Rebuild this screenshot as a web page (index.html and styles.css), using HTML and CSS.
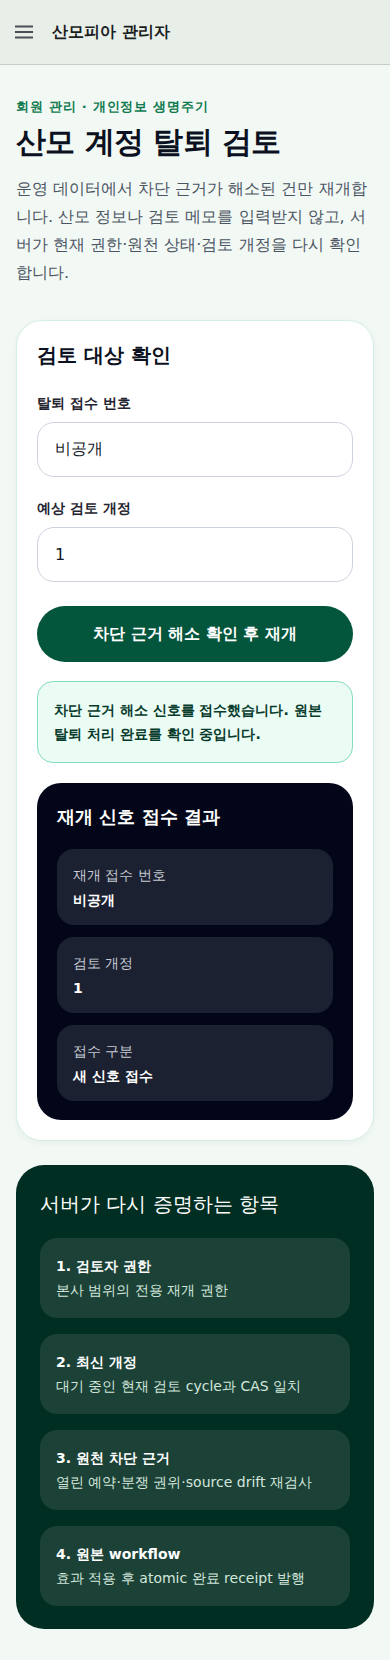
FILE: index.html
```html
<!DOCTYPE html>
<html lang="ko">
<head>
<meta charset="UTF-8">
<meta name="viewport" content="width=device-width, initial-scale=1">
<title>산모피아 관리자</title>
<link rel="stylesheet" href="styles.css">
</head>
<body>

<header class="topbar">
  <span class="menu-icon" aria-hidden="true">
    <svg width="18" height="14" viewBox="0 0 18 14">
      <path d="M0 1.5h18M0 7h18M0 12.5h18" stroke="#4a4f55" stroke-width="2"/>
    </svg>
  </span>
  <span class="brand">산모피아 관리자</span>
</header>

<main class="page">
  <p class="eyebrow">회원 관리 · 개인정보 생명주기</p>
  <h1 class="title">산모 계정 탈퇴 검토</h1>
  <p class="lead">운영 데이터에서 차단 근거가 해소된 건만 재개합니다. 산모 정보나 검토 메모를 입력받지 않고, 서버가 현재 권한·원천 상태·검토 개정을 다시 확인합니다.</p>

  <section class="card">
    <h2 class="card-title">검토 대상 확인</h2>

    <label class="field-label" for="receipt">탈퇴 접수 번호</label>
    <input class="field" id="receipt" type="text" value="비공개" readonly>

    <label class="field-label" for="revision">예상 검토 개정</label>
    <input class="field" id="revision" type="text" value="1" readonly>

    <button class="primary-btn" type="button">차단 근거 해소 확인 후 재개</button>

    <div class="notice">차단 근거 해소 신호를 접수했습니다. 원본 탈퇴 처리 완료를 확인 중입니다.</div>

    <div class="result">
      <h3 class="result-title">재개 신호 접수 결과</h3>
      <div class="result-item">
        <span class="result-label">재개 접수 번호</span>
        <strong class="result-value">비공개</strong>
      </div>
      <div class="result-item">
        <span class="result-label">검토 개정</span>
        <strong class="result-value">1</strong>
      </div>
      <div class="result-item">
        <span class="result-label">접수 구분</span>
        <strong class="result-value">새 신호 접수</strong>
      </div>
    </div>
  </section>

  <section class="proof">
    <h2 class="proof-title">서버가 다시 증명하는 항목</h2>
    <div class="proof-item">
      <strong>1. 검토자 권한</strong>
      <span>본사 범위의 전용 재개 권한</span>
    </div>
    <div class="proof-item">
      <strong>2. 최신 개정</strong>
      <span>대기 중인 현재 검토 cycle과 CAS 일치</span>
    </div>
    <div class="proof-item">
      <strong>3. 원천 차단 근거</strong>
      <span>열린 예약·분쟁 권위·source drift 재검사</span>
    </div>
    <div class="proof-item">
      <strong>4. 원본 workflow</strong>
      <span>효과 적용 후 atomic 완료 receipt 발행</span>
    </div>
  </section>
</main>

</body>
</html>
```

FILE: styles.css
```css
* {
  box-sizing: border-box;
}

body {
  margin: 0;
  background: #f2f8f4;
  color: #0b1120;
  font-family: "DejaVu Sans", sans-serif;
}

.topbar {
  display: flex;
  align-items: center;
  gap: 19px;
  height: 65px;
  padding: 0 15px;
  background: #e8efe9;
  border-bottom: 1px solid #c6ccc8;
}

.menu-icon {
  display: flex;
}

.brand {
  font-size: 16px;
  font-weight: 600;
  color: #1a1d21;
}

.page {
  padding: 33px 16px 33px;
}

.eyebrow {
  margin: 0;
  font-size: 13px;
  line-height: 18px;
  font-weight: 700;
  letter-spacing: 0.06em;
  color: #0f7a4f;
}

.title {
  margin: 7px 0 0;
  font-size: 30px;
  line-height: 38px;
  font-weight: 700;
  letter-spacing: -0.02em;
}

.lead {
  margin: 14px 0 0;
  font-size: 16px;
  line-height: 28px;
  color: #4b5563;
}

/* 검토 카드 */
.card {
  margin-top: 33px;
  padding: 20px 20px 20px;
  background: #fff;
  border: 1px solid #d6efe3;
  border-radius: 26px;
  box-shadow: 0 2px 6px rgba(16, 80, 50, 0.05);
}

.card-title {
  margin: 0 0 24px;
  font-size: 20px;
  line-height: 28px;
  font-weight: 700;
}

.field-label {
  display: block;
  margin-bottom: 9px;
  font-size: 14px;
  line-height: 20px;
  font-weight: 600;
  color: #1f2430;
}

.field {
  display: block;
  width: 100%;
  height: 55px;
  margin-bottom: 21px;
  padding: 0 17px;
  border: 1px solid #cdd3de;
  border-radius: 17px;
  background: #fff;
  font: inherit;
  font-size: 16px;
  color: #111827;
}

.primary-btn {
  display: block;
  width: 100%;
  height: 56px;
  margin-top: 24px; /* 입력칸 margin과 겹침 */
  border: none;
  border-radius: 28px;
  background: #03553c;
  color: #fff;
  font: inherit;
  font-size: 16px;
  font-weight: 700;
}

.notice {
  margin-top: 19px;
  padding: 16px 16px;
  background: #ebfcf4;
  border: 1px solid #84dcbe;
  border-radius: 16px;
  font-size: 14px;
  line-height: 24px;
  font-weight: 700;
  color: #073b2c;
}

.result {
  margin-top: 20px;
  padding: 20px 20px 19px;
  background: #030618;
  border-radius: 24px;
  color: #fff;
}

.result-title {
  margin: 0 0 18px;
  font-size: 18px;
  line-height: 28px;
  font-weight: 700;
}

.result-item {
  display: flex;
  flex-direction: column;
  gap: 5px;
  padding: 16px 16px 15px;
  background: #1c2131;
  border-radius: 17px;
}

.result-item + .result-item {
  margin-top: 12px;
}

.result-label {
  font-size: 14px;
  line-height: 20px;
  color: #c4c9d3;
}

.result-value {
  font-size: 14px;
  line-height: 20px;
  font-weight: 700;
}

/* 서버 증명 항목 */
.proof {
  margin-top: 24px;
  padding: 24px 24px 23px;
  background: #012e22;
  border-radius: 28px;
  color: #fff;
}

.proof-title {
  margin: 0 0 19px;
  font-size: 20px;
  line-height: 30px;
  font-weight: 500;
}

.proof-item {
  display: flex;
  flex-direction: column;
  gap: 2px;
  padding: 17px 16px;
  background: #1c4237;
  border-radius: 17px;
  font-size: 14px;
  line-height: 22px;
}

.proof-item + .proof-item {
  margin-top: 16px;
}

.proof-item strong {
  font-weight: 700;
}

.proof-item span {
  color: #d3e6dc;
}
```
